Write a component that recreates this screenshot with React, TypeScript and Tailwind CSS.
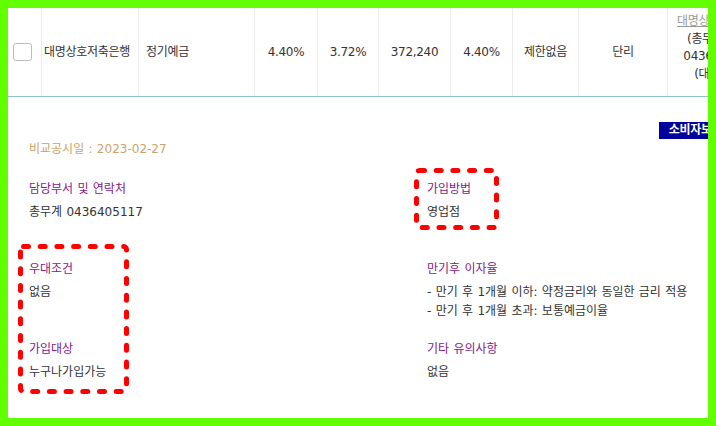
import React from "react";

const LABEL = "leading-[18px] text-[#84208a]";

function Info({ label, lines }: { label: string; lines: string[] }) {
  return (
    <div>
      <p className={LABEL}>{label}</p>
      <div className="mt-[5px] leading-[18.5px]">
        {lines.map((l) => (
          <p key={l}>{l}</p>
        ))}
      </div>
    </div>
  );
}

function DashedBox({ className, w, h }: { className: string; w: number; h: number }) {
  return (
    <svg className={className} width={w} height={h} viewBox={`0 0 ${w} ${h}`}>
      <rect
        x={2.5}
        y={2.5}
        width={w - 5}
        height={h - 5}
        rx={3}
        fill="none"
        stroke="#ff0000"
        strokeWidth={5}
        strokeLinecap="round"
        strokeDasharray="5 11.7"
      />
    </svg>
  );
}

export default function App() {
  return (
    <div className="w-[716px] h-[426px] bg-[#62ff00] p-2">
      <div className="relative w-full h-full bg-white overflow-hidden text-[12px] tracking-[-0.3px] text-[#333] font-['DejaVu_Sans','Noto_Sans_CJK_KR',sans-serif]">
        {/* product row */}
        <div className="flex h-[89px] w-[780px] border-b border-[#8fc3cc]">
          <div className="w-[34px] flex items-center pl-[5px] border-r border-[#ebebeb]">
            <span className="w-[19px] h-[18px] rounded-[3px] border border-[#bdbdbd] bg-white" />
          </div>
          <div className="w-[97px] flex items-center pl-[2px] border-r border-[#ebebeb] whitespace-nowrap">대명상호저축은행</div>
          <div className="w-[116px] flex items-center pl-[7px] border-r border-[#ebebeb]">정기예금</div>
          <div className="w-[63px] flex items-center justify-center border-r border-[#ebebeb]">4.40%</div>
          <div className="w-[61px] flex items-center justify-center border-r border-[#ebebeb]">3.72%</div>
          <div className="w-[72px] flex items-center justify-center border-r border-[#ebebeb]">372,240</div>
          <div className="w-[62px] flex items-center justify-center border-r border-[#ebebeb]">4.40%</div>
          <div className="w-[66px] flex items-center justify-center border-r border-[#ebebeb]">제한없음</div>
          <div className="w-[89px] flex items-center justify-center border-r border-[#ebebeb]">단리</div>
          <div className="w-[104px] flex flex-col items-center justify-center text-center leading-[17.5px] whitespace-nowrap pb-[8px]">
            <span className="text-[#999] underline">대명상호저축은행</span>
            <span>(총무계 담당)</span>
            <span>0436405117</span>
            <span>(대표번호)</span>
          </div>
        </div>

        {/* detail */}
        <div className="pl-[21px] pt-[25px] tracking-normal [word-spacing:0.5px]">
          <div className="flex justify-end h-[17px]">
            <span className="bg-[#00009c] text-white font-bold px-[10px] leading-[17px] -mr-[46px] whitespace-nowrap tracking-[-0.3px]">소비자보호정보</span>
          </div>
          <p className="mt-[1px] leading-[18px] text-[#c9a36b]">비교공시일 : 2023-02-27</p>
          <div className="mt-[22px] grid grid-cols-[398px_1fr] auto-rows-[80px]">
            <Info label="담당부서 및 연락처" lines={["총무계 0436405117"]} />
            <Info label="가입방법" lines={["영업점"]} />
            <Info label="우대조건" lines={["없음"]} />
            <Info
              label="만기후 이자율"
              lines={["- 만기 후 1개월 이하: 약정금리와 동일한 금리 적용", "- 만기 후 1개월 초과: 보통예금이율"]}
            />
            <Info label="가입대상" lines={["누구나가입가능"]} />
            <Info label="기타 유의사항" lines={["없음"]} />
          </div>
        </div>

        <DashedBox className="absolute left-[406px] top-[160px] pointer-events-none" w={85} h={62} />
        <DashedBox className="absolute left-[10px] top-[236px] pointer-events-none" w={111} h={150} />
      </div>
    </div>
  );
}
